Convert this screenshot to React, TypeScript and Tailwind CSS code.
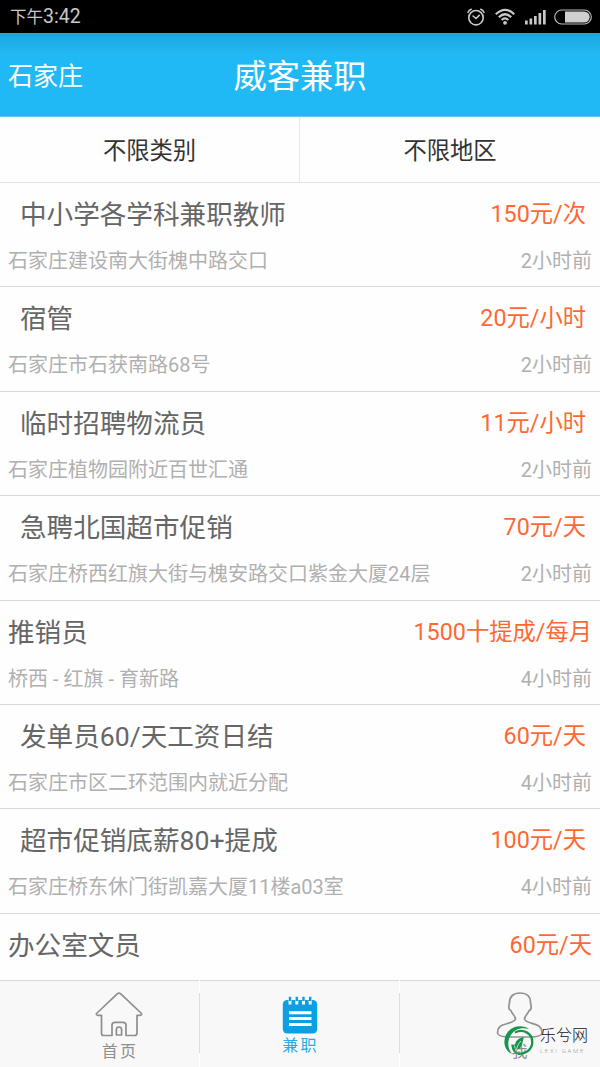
import React from 'react';

interface Job {
  title: string;
  pay: string;
  place?: string;
  time?: string;
  indent: boolean;
}

const jobs: Job[] = [
  { title: '中小学各学科兼职教师', pay: '150元/次', place: '石家庄建设南大街槐中路交口', time: '2小时前', indent: true },
  { title: '宿管', pay: '20元/小时', place: '石家庄市石获南路68号', time: '2小时前', indent: true },
  { title: '临时招聘物流员', pay: '11元/小时', place: '石家庄植物园附近百世汇通', time: '2小时前', indent: true },
  { title: '急聘北国超市促销', pay: '70元/天', place: '石家庄桥西红旗大街与槐安路交口紫金大厦24层', time: '2小时前', indent: true },
  { title: '推销员', pay: '1500十提成/每月', place: '桥西 - 红旗 - 育新路', time: '4小时前', indent: false },
  { title: '发单员60/天工资日结', pay: '60元/天', place: '石家庄市区二环范围内就近分配', time: '4小时前', indent: true },
  { title: '超市促销底薪80+提成', pay: '100元/天', place: '石家庄桥东休门街凯嘉大厦11楼a03室', time: '4小时前', indent: true },
  { title: '办公室文员', pay: '60元/天', indent: false },
];

function StatusBar() {
  return (
    <div className="flex h-[33px] shrink-0 items-center justify-between bg-black pl-[10px] pr-[8px] text-[#c8c8c8]">
      <span className="text-[16.5px] leading-[33px]">
        下午<span className="text-[19.5px]">3:42</span>
      </span>
      <div className="flex items-center">
        <svg width="18" height="18" viewBox="0 0 18 18" fill="none" stroke="currentColor" strokeWidth="1.6" strokeLinecap="round">
          <circle cx="9" cy="9.7" r="7.2" />
          <path d="M6 8l3 2.5L12.2 7.4M1 4.3Q2 2 4.2 1.2M17 4.3Q16 2 13.8 1.2" />
        </svg>
        <svg className="ml-[10px]" width="20" height="17" viewBox="0 0 20 17" fill="none" stroke="currentColor" strokeWidth="2.2">
          <path d="M.8 6.200Q10-2.5 19.2 6.200M3.8 9.300Q10 3.2 16.2 9.300M6.7 12.100Q10 8.7 13.3 12.100" />
          <circle cx="10" cy="14.8" r="1.9" fill="currentColor" stroke="none" />
        </svg>
        <svg className="ml-[10px]" width="21" height="16" viewBox="0 0 21 16" fill="currentColor">
          <rect x="0" y="11.5" width="2.7" height="4" />
          <rect x="4.5" y="9.5" width="2.7" height="6" />
          <rect x="9" y="7" width="2.7" height="8.5" />
          <rect x="13.5" y="4" width="2.7" height="11.5" />
          <rect x="18" y="1" width="2.7" height="14.5" />
        </svg>
        <svg className="ml-[8px]" width="38" height="16" viewBox="0 0 38 16">
          <rect x=".7" y="1" width="36.6" height="14" rx="7" fill="none" stroke="#b9b9b9" strokeWidth="1.2" />
          <path d="M11 2.500H30.200a5.500 5.500 0 0 1 0 11H11z" fill="#cfcfcf" />
        </svg>
      </div>
    </div>
  );
}

function Header() {
  return (
    <header className="grid h-[84px] shrink-0 grid-cols-3 items-center border-b border-[#5fcaf3] bg-[#20b9f5] bg-linear-to-b from-[#1ea5dc] to-[#20b9f5] to-25% px-[8px] pt-[5px] text-white">
      <span className="text-[25px] leading-[78px]">石家庄</span>
      <h1 className="text-center text-[33.3px] leading-[78px]">威客兼职</h1>
    </header>
  );
}

function Filters() {
  return (
    <div className="grid h-[66px] shrink-0 grid-cols-2 border-b border-[#e4e4e4] text-center text-[23.3px] leading-[61px] text-[#333]">
      <div className="border-r border-[#e8e8e8] pt-[4px]">不限类别</div>
      <div className="pt-[4px]">不限地区</div>
    </div>
  );
}

function JobRow({ job }: { job: Job }) {
  return (
    <li className="h-[104.4px] shrink-0 border-b border-[#d8d8d8] px-[8px] pt-px">
      <div className={job.indent ? 'flex h-[62px] justify-between pl-[12px] pr-[6px]' : 'flex h-[62px] justify-between'}>
        <span className="text-[26.6px] leading-[62px] text-[#666]">{job.title}</span>
        <span className="text-[23.3px] leading-[60px] text-[#ff6833]">{job.pay}</span>
      </div>
      {job.place && (
        <div className="flex h-[30px] justify-between text-[20px] leading-[30px] text-[#b0b0b0]">
          <span>{job.place}</span>
          <span>{job.time}</span>
        </div>
      )}
    </li>
  );
}

function HomeIcon() {
  return (
    <svg width="48" height="46" viewBox="0 0 48 46" fill="none" stroke="#8e8e8e" strokeWidth="1.7" strokeLinejoin="round">
      <path d="M22.500 1.700Q24 .5 25.500 1.700L46.500 21.500Q47 23.200 45 23.300H42V41Q42 43.500 39.500 43.500H31V33Q31 30.300 28 30.300H20Q17 30.300 17 33V43.500H8.500Q6.500 43.500 6.500 41V23.300H3Q1 23.200 1.500 21.500Z" />
      <path d="M21.400 43V37.500Q21.400 35 24 35Q26.600 35 26.600 37.500V43Z" />
    </svg>
  );
}

function NotepadIcon() {
  return (
    <svg width="36" height="38" viewBox="0 0 36 38">
      <rect x=".8" y="4" width="34.400" height="33.500" rx="4.500" fill="#0c9fe2" />
      <path d="M8 3V8.500M14.800 3V8.500M21.500 3V8.500M28.200 3V8.500" stroke="#f8f8f8" strokeWidth="3" />
      <path d="M8 .8V5M14.800 .8V5M21.500 .8V5M28.200 .8V5" stroke="#0c9fe2" strokeWidth="2.400" />
      <path d="M7 16.700H29.500M7 22.600H29.500M7 28.500H29.500" stroke="#fff" strokeWidth="3" />
    </svg>
  );
}

function PersonIcon() {
  return (
    <svg width="48" height="48" viewBox="0 0 48 48" fill="none" stroke="#929292" strokeWidth="1.7">
      <path d="M24 1C17.500 1 13.500 4.500 13.500 10.500C13.500 12 12.800 13 12.800 15C12.800 17.500 14 18.500 15 18.800C16 22 19.500 24 19.500 27C19.500 30 10 31.500 5.500 33.500C2 35.500 1.500 38 1.500 41Q2 45 14 45H34Q45.500 45 46 41C46 38 45.500 35.500 42 33.500C38 31.500 28.500 30 28.500 27C28.500 24 32 22 33 18.800C34 18.500 35.200 17.500 35.200 15C35.200 13 34.500 12 34.500 10.500C34.500 4.500 30.500 1 24 1Z" />
    </svg>
  );
}

function SiteMark() {
  return (
    <div className="absolute left-[503px] top-[44px] flex items-center">
      <svg width="32" height="31" viewBox="0 0 32 31">
        <path d="M26 4C20-.5 9 .5 4 8C-1 16 1.500 26 9 29C5 24 4 17 7 11.500C11 4 18 2 26 4Z" fill="#16964a" />
        <path d="M12 7.500C20 3.500 29.300 8 29.300 17C29.300 24 23.500 29 15 28.800" fill="none" stroke="#16964a" strokeWidth="2.300" />
        <path d="M21 12C13 13.500 10 19 13.500 25C19.500 23.500 19 18 21 12Z" fill="#16964a" />
        <path d="M8.500 19C8 24 11 29.500 17 29.500C13 28 11.500 25 11.500 21Z" fill="#16964a" />
        <path d="M13.500 25C14 21 16 18 18 16" fill="none" stroke="#e9f4ec" strokeWidth=".8" />
      </svg>
      <div className="ml-[5px]">
        <div className="text-[16px] font-light leading-[18px] text-[#111]">乐兮网</div>
        <div className="mt-px text-[6px] font-light leading-[9px] tracking-[1.7px] text-[#999]">LEXI GAME</div>
      </div>
    </div>
  );
}

function NavDivider() {
  return (
    <div className="-mt-px h-[87px] w-px bg-white pt-[13px]">
      <div className="h-[60px] bg-[#dedede]" />
    </div>
  );
}

function BottomNav() {
  return (
    <nav className="relative flex h-[87px] shrink-0 border-t border-[#d9d9d9] bg-[#f8f8f8] text-[16px] leading-[20px]">
      <div className="flex w-[199px] flex-col items-center pl-[39px] pt-[11px] text-[#8e8e8e]">
        <HomeIcon />
        <span className="mt-[4px] pl-[2px] tracking-[2.3px]">首页</span>
      </div>
      <NavDivider />
      <div className="flex w-[199px] flex-col items-center pt-[15px] text-[#2daae4]">
        <NotepadIcon />
        <span className="mt-[2px] pl-[2px] tracking-[2.3px]">兼职</span>
      </div>
      <NavDivider />
      <div className="flex w-[200px] flex-col items-center pl-[39px] pt-[11px] text-[#8e8e8e]">
        <PersonIcon />
        <span className="mt-[2px]">我</span>
      </div>
      <SiteMark />
    </nav>
  );
}

export default function App() {
  return (
    <div className="flex h-[1067px] w-[600px] flex-col overflow-hidden bg-[#fefefe] font-['Roboto','Noto_Sans_CJK_SC',sans-serif]">
      <StatusBar />
      <Header />
      <Filters />
      <ul className="flex h-[797px] shrink-0 flex-col overflow-hidden">
        {jobs.map((job) => (
          <JobRow key={job.title} job={job} />
        ))}
      </ul>
      <BottomNav />
    </div>
  );
}
